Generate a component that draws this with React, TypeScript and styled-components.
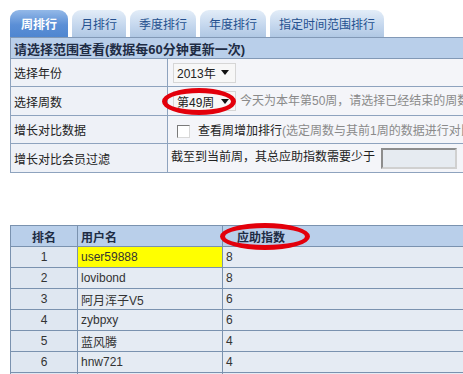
import styled, { createGlobalStyle } from "styled-components";

const GlobalStyle = createGlobalStyle`
  html, body {
    margin: 0;
    padding: 0;
    background: #ffffff;
    overflow: hidden;
  }
  body {
    font-family: "Liberation Sans", "Noto Sans CJK SC", sans-serif;
    font-size: 12px;
    color: #222;
  }
`;

const Page = styled.div`
  padding: 10px 0 0 10px;
  width: 680px;
`;

const Tabs = styled.div`
  display: flex;
  align-items: flex-end;
  gap: 4px;
  height: 27px;
`;

const Tab = styled.div<{ $active?: boolean }>`
  height: 27px;
  display: flex;
  align-items: center;
  padding: 0 ${(p) => (p.$active ? "11px" : "9px")};
  border-radius: 9px 9px 0 0;
  font-size: 12px;
  font-weight: ${(p) => (p.$active ? 700 : 400)};
  color: ${(p) => (p.$active ? "#ffffff" : "#24508f")};
  background: ${(p) =>
    p.$active
      ? "linear-gradient(#94b9e8, #5b8fd6 55%, #4f86d0)"
      : "linear-gradient(#e3edf8, #c6d8ee 55%, #b0c8e4)"};
`;

const FormTable = styled.table`
  width: 640px;
  border-collapse: collapse;
  border-top: 1px solid #6f8aab;

  th {
    height: 20px;
    padding: 0 3px;
    text-align: left;
    font-size: 13px;
    font-weight: 700;
    color: #1e2c44;
    background: #b9cfea;
    border: 1px solid #8299b6;
  }
  td {
    padding: 0 5px 0 3px;
    border: 1px solid #8ea3be;
    background: #f4f5f9;
    white-space: nowrap;
  }
`;

const LabelCell = styled.td<{ $h: number }>`
  width: 148px;
  height: ${(p) => p.$h}px;
  && {
    background: #eef1f7;
  }
`;

const Fake = styled.span`
  position: relative;
  display: inline-flex;
  align-items: center;
  justify-content: space-between;
  width: 52px;
  height: 18px;
  padding: 0 6px 0 3px;
  margin-left: 2px;
  background: #f7f7f7;
  border: 1px solid #d6d6d6;
  vertical-align: middle;
  font-size: 12px;
  color: #222;

  &::after {
    content: "";
    border-left: 4px solid transparent;
    border-right: 4px solid transparent;
    border-top: 5px solid #111;
  }
`;

const Hint = styled.span<{ $tight?: boolean }>`
  color: #8a8a8a;
  margin-left: ${(p) => (p.$tight ? 0 : 4)}px;
`;

const Check = styled.span`
  display: inline-block;
  width: 11px;
  height: 11px;
  margin: 0 8px 0 6px;
  background: #fff;
  border: 1px solid #7a7a7a;
  border-right-color: #d8d8d8;
  border-bottom-color: #d8d8d8;
  vertical-align: middle;
`;

const Text = styled.span`
  font-size: 12px;
  color: #222;
`;

const Box = styled.span`
  display: inline-block;
  width: 72px;
  height: 17px;
  margin: 0 6px 0 6px;
  background: #e6ebf1;
  border: 2px solid #8d8d8d;
  border-right-color: #d0d0d0;
  border-bottom-color: #d0d0d0;
  vertical-align: middle;
`;

const Ring = styled.span<{ $l: number; $t: number; $w: number; $h: number }>`
  position: absolute;
  left: ${(p) => p.$l}px;
  top: ${(p) => p.$t}px;
  width: ${(p) => p.$w}px;
  height: ${(p) => p.$h}px;
  box-sizing: border-box;
  border: 5px solid #e3000b;
  border-radius: 50%;
  pointer-events: none;
`;

const RankTable = styled.table`
  margin-top: 52px;
  width: 640px;
  border-collapse: collapse;

  th, td {
    height: 20px;
    padding: 0 3px;
    border: 1px solid #7a92af;
    font-size: 12px;
    color: #333;
  }
  th {
    background: #b9cfea;
    color: #1e2c44;
    font-weight: 700;
    text-align: left;
  }
  td {
    background: #e5ebf3;
  }
`;

const RankHead = styled.th`
  width: 60px;
  && {
    text-align: center;
  }
`;

const NameHead = styled.th`
  width: 138px;
`;

const ScoreHead = styled.th`
  position: relative;
  && {
    padding-left: 14px;
  }
`;

const RankCell = styled.td`
  text-align: center;
  && {
    background: #dfe7f1;
  }
`;

const NameCell = styled.td<{ $mark?: boolean }>`
  && {
    background: ${(p) => (p.$mark ? "#ffff00" : "#e5ebf3")};
  }
`;

const rows = [
  { name: "user59888", score: 8, mark: true },
  { name: "lovibond", score: 8 },
  { name: "阿月浑子V5", score: 6 },
  { name: "zybpxy", score: 6 },
  { name: "蓝风腾", score: 4 },
  { name: "hnw721", score: 4 },
  { name: "", score: "" },
];

const tabs = ["周排行", "月排行", "季度排行", "年度排行", "指定时间范围排行"];

export default function App() {
  return (
    <>
      <GlobalStyle />
      <Page>
        <Tabs>
          {tabs.map((t, i) => (
            <Tab key={t} $active={i === 0}>
              {t}
            </Tab>
          ))}
        </Tabs>
        <FormTable>
          <tbody>
            <tr>
              <th colSpan={2}>请选择范围查看(数据每60分钟更新一次)</th>
            </tr>
            <tr>
              <LabelCell $h={27}>选择年份</LabelCell>
              <td>
                <Fake>2013年</Fake>
              </td>
            </tr>
            <tr>
              <LabelCell $h={28}>选择周数</LabelCell>
              <td>
                <Fake>
                  第49周
                  <Ring $l={-12} $t={-4} $w={74} $h={27} />
                </Fake>
                <Hint>今天为本年第50周，请选择已经结束的周数</Hint>
              </td>
            </tr>
            <tr>
              <LabelCell $h={27}>增长对比数据</LabelCell>
              <td>
                <Check />
                <Text>查看周增加排行</Text>
                <Hint $tight>(选定周数与其前1周的数据进行对比)</Hint>
              </td>
            </tr>
            <tr>
              <LabelCell $h={28}>增长对比会员过滤</LabelCell>
              <td>
                <Text>截至到当前周，其总应助指数需要少于</Text>
                <Box />
                <Text>个</Text>
              </td>
            </tr>
          </tbody>
        </FormTable>
        <RankTable>
          <thead>
            <tr>
              <RankHead>排名</RankHead>
              <NameHead>用户名</NameHead>
              <ScoreHead>
                应助指数
                <Ring $l={-3} $t={-3} $w={90} $h={27} />
              </ScoreHead>
            </tr>
          </thead>
          <tbody>
            {rows.map((r, i) => (
              <tr key={i}>
                <RankCell>{r.name ? i + 1 : ""}</RankCell>
                <NameCell $mark={r.mark}>{r.name}</NameCell>
                <td>{r.score}</td>
              </tr>
            ))}
          </tbody>
        </RankTable>
      </Page>
    </>
  );
}
